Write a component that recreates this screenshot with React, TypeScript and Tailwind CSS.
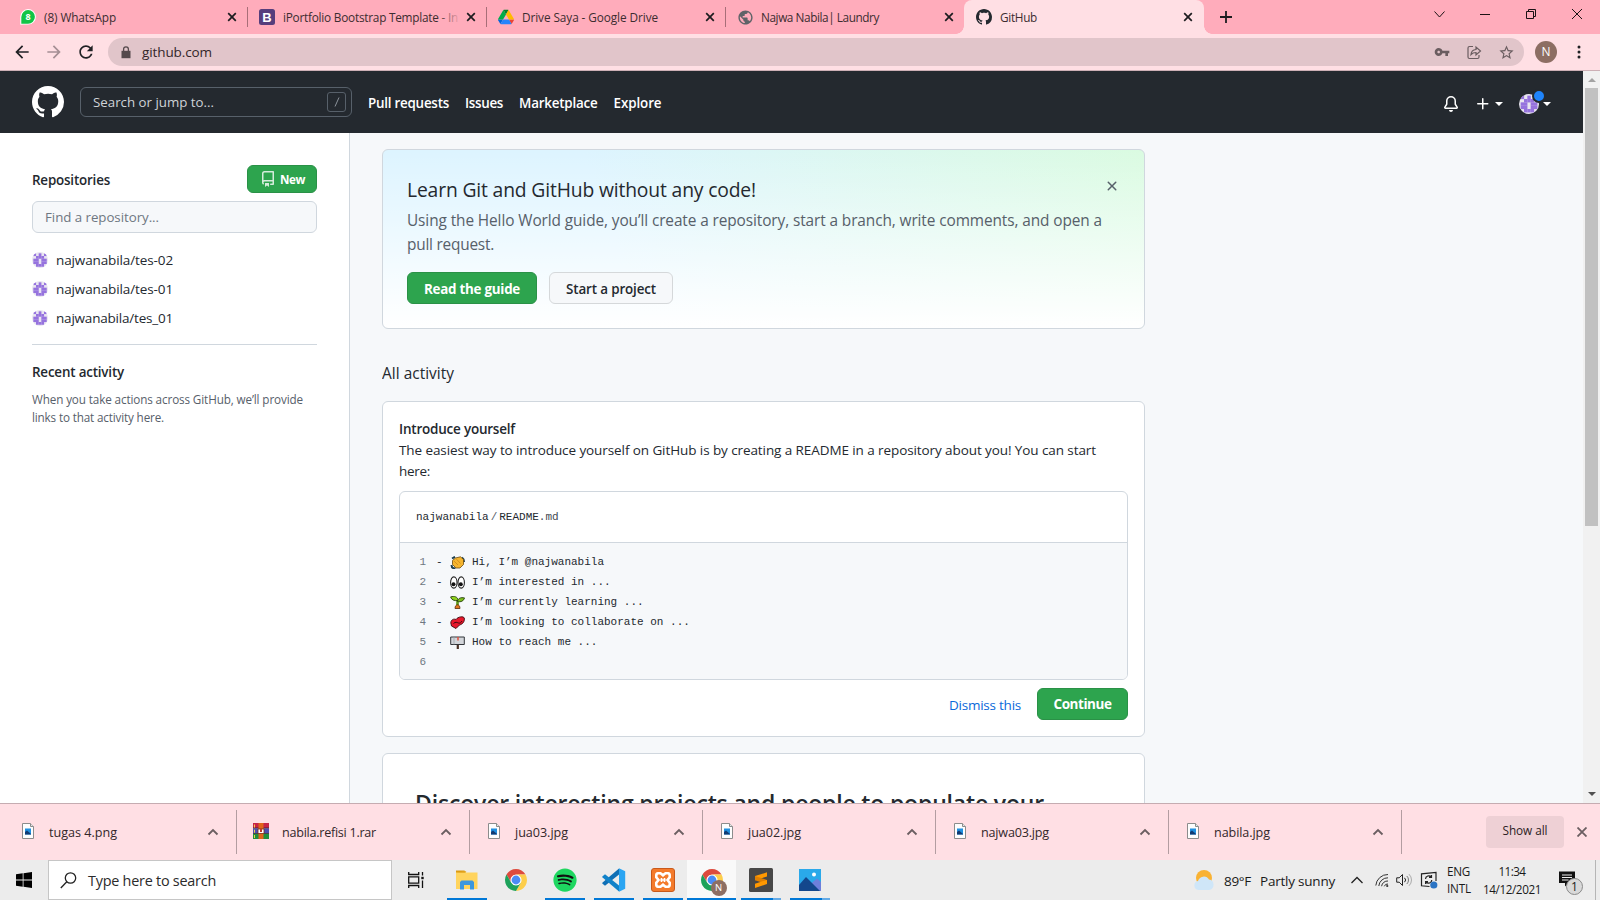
import { useLayoutEffect, useRef, useState, type ReactNode } from "react";
import { FaSpotify } from "react-icons/fa";

/* Single-line text that spreads its letters to fill a given advance width. */
function Fit({ w, className = "", flush, children }: { w: number; className?: string; flush?: boolean; children: string }) {
  const ref = useRef<HTMLSpanElement>(null);
  const [spacing, setSpacing] = useState(0);
  useLayoutEffect(() => {
    const el = ref.current;
    if (!el) return;
    el.style.letterSpacing = "0px";
    const gap = (w - el.getBoundingClientRect().width) / children.length;
    el.style.letterSpacing = `${gap}px`;
    setSpacing(gap);
  }, [w, children]);
  return (
    <span
      ref={ref}
      className={`inline-block shrink-0 whitespace-pre ${flush ? "" : "pt-0.5"} ${className}`}
      style={{ letterSpacing: spacing }}
    >
      {children}
    </span>
  );
}

function Octicon({ d, className = "" }: { d: string[]; className?: string }) {
  return (
    <svg viewBox="0 0 16 16" fill="currentColor" fillRule="evenodd" className={className}>
      {d.map((p) => (
        <path key={p} d={p} />
      ))}
    </svg>
  );
}

function Material({ d, className = "" }: { d: string; className?: string }) {
  return (
    <svg viewBox="0 0 24 24" fill="currentColor" className={`shrink-0 ${className}`}>
      <path d={d} />
    </svg>
  );
}

const MARK = [
  "M8 0C3.58 0 0 3.58 0 8c0 3.54 2.29 6.53 5.47 7.59.4.07.55-.17.55-.38 0-.19-.01-.82-.01-1.49-2.01.37-2.53-.49-2.69-.94-.09-.23-.48-.94-.82-1.13-.28-.15-.68-.52-.01-.53.63-.01 1.08.58 1.23.82.72 1.21 1.87.87 2.33.66.07-.52.28-.87.51-1.07-1.78-.2-3.64-.89-3.64-3.95 0-.87.31-1.59.82-2.15-.08-.2-.36-1.02.08-2.12 0 0 .67-.21 2.2.82.64-.18 1.32-.27 2-.27.68 0 1.36.09 2 .27 1.53-1.04 2.2-.82 2.2-.82.44 1.1.16 1.92.08 2.12.51.56.82 1.27.82 2.15 0 3.07-1.87 3.75-3.65 3.95.29.25.54.73.54 1.48 0 1.07-.01 1.93-.01 2.2 0 .21.15.46.55.38A8.013 8.013 0 0016 8c0-4.42-3.58-8-8-8z",
];
const BELL = [
  "M8 16a2 2 0 001.985-1.75c.017-.137-.097-.25-.235-.25h-3.5c-.138 0-.252.113-.235.25A2 2 0 008 16z",
  "M8 1.5A3.5 3.5 0 004.5 5v2.947c0 .346-.102.683-.294.97l-1.703 2.556a.018.018 0 00-.003.01l.001.006c0 .002.002.004.004.006a.017.017 0 00.006.004l.007.001h10.964l.007-.001a.016.016 0 00.006-.004.016.016 0 00.004-.006l.001-.007a.017.017 0 00-.003-.01l-1.703-2.554a1.75 1.75 0 01-.294-.97V5A3.5 3.5 0 008 1.5zM3 5a5 5 0 0110 0v2.947c0 .05.015.098.042.139l1.703 2.555A1.518 1.518 0 0113.482 13H2.518a1.518 1.518 0 01-1.263-2.36l1.703-2.554A.25.25 0 003 7.947V5z",
];
const PLUS = [
  "M7.75 2a.75.75 0 01.75.75V7h4.25a.75.75 0 110 1.5H8.5v4.25a.75.75 0 11-1.5 0V8.5H2.75a.75.75 0 010-1.5H7V2.75A.75.75 0 017.75 2z",
];
const REPO = [
  "M2 2.5A2.5 2.5 0 014.5 0h8.75a.75.75 0 01.75.75v12.5a.75.75 0 01-.75.75h-2.5a.75.75 0 110-1.5h1.75v-2h-8a1 1 0 00-.714 1.7.75.75 0 01-1.072 1.05A2.495 2.495 0 012 11.5v-9zm10.5-1V9h-8c-.356 0-.694.074-1 .208V2.5a1 1 0 011-1h8zM5 12.25v3.25a.25.25 0 00.4.2l1.45-1.087a.25.25 0 01.3 0L8.6 15.7a.25.25 0 00.4-.2v-3.25a.25.25 0 00-.25-.25h-3.5a.25.25 0 00-.25.25z",
];
const CROSS = [
  "M3.72 3.72a.75.75 0 011.06 0L8 6.94l3.22-3.22a.75.75 0 111.06 1.06L9.06 8l3.22 3.22a.75.75 0 11-1.06 1.06L8 9.06l-3.22 3.22a.75.75 0 01-1.06-1.06L6.94 8 3.72 4.78a.75.75 0 010-1.06z",
];
const M_BACK = "M20 11H7.83l5.59-5.59L12 4l-8 8 8 8 1.41-1.41L7.83 13H20v-2z";
const M_RELOAD =
  "M17.65 6.35C16.2 4.9 14.21 4 12 4c-4.42 0-7.99 3.58-7.99 8s3.57 8 7.99 8c3.73 0 6.84-2.55 7.73-6h-2.08c-.82 2.33-3.04 4-5.65 4-3.31 0-6-2.69-6-6s2.69-6 6-6c1.66 0 3.14.69 4.22 1.78L13 11h7V4l-2.35 2.35z";
const M_KEY =
  "M12.65 10C11.83 7.67 9.61 6 7 6c-3.31 0-6 2.69-6 6s2.69 6 6 6c2.61 0 4.83-1.67 5.65-4H17v4h4v-4h2v-4H12.65zM7 14c-1.1 0-2-.9-2-2s.9-2 2-2 2 .9 2 2-.9 2-2 2z";
const M_STAR =
  "M22 9.24l-7.19-.62L12 2 9.19 8.63 2 9.24l5.46 4.73L5.82 21 12 17.27 18.18 21l-1.63-7.03L22 9.24zM12 15.4l-3.76 2.27 1-4.28-3.32-2.88 4.38-.38L12 6.1l1.71 4.04 4.38.38-3.32 2.88 1 4.28L12 15.4z";
const M_GLOBE =
  "M12 2C6.48 2 2 6.48 2 12s4.48 10 10 10 10-4.48 10-10S17.52 2 12 2zm-1 17.93c-3.95-.49-7-3.85-7-7.93 0-.62.08-1.21.21-1.79L9 15v1c0 1.1.9 2 2 2v1.93zm6.9-2.54c-.26-.81-1-1.39-1.9-1.39h-1v-3c0-.55-.45-1-1-1H8v-2h2c.55 0 1-.45 1-1V7h2c1.1 0 2-.9 2-2v-.41c2.93 1.19 5 4.06 5 7.41 0 2.08-.8 3.97-2.1 5.39z";

/* ---------- Browser tabs ---------- */

function TabClose() {
  return (
    <svg viewBox="0 0 10 10" className="h-2.5 w-2.5 shrink-0" stroke="#1c1c1f" strokeWidth="1.7">
      <path d="M1.2 1.2l7.6 7.6M8.8 1.2l-7.6 7.6" />
    </svg>
  );
}

const whatsapp = (
  <svg viewBox="0 0 16 16" className="h-4 w-4">
    <path d="M0.3 15.8V8A7.8 7.8 0 1 1 8.2 15.6H4z" fill="#fff" />
    <path d="M1.3 14.8V8A6.8 6.8 0 1 1 8.1 14.7H4z" fill="#12c446" />
    <text x="8" y="11.3" textAnchor="middle" fontSize="9" fontWeight="700" fill="#fff" fontFamily="Open Sans, sans-serif">
      8
    </text>
  </svg>
);
const bootstrap = (
  <svg viewBox="0 0 16 16" className="h-4 w-4">
    <rect width="16" height="16" rx="2.5" fill="#563d7c" />
    <text x="8" y="12.6" textAnchor="middle" fontSize="13" fontWeight="700" fill="#fff" fontFamily="Liberation Sans, sans-serif">
      B
    </text>
  </svg>
);
const drive = (
  <svg viewBox="0 0 87.3 78" className="h-4 w-4">
    <path d="M6.6 66.85l3.85 6.65c.8 1.4 1.95 2.5 3.3 3.3L27.5 53H0c0 1.55.4 3.1 1.2 4.5z" fill="#0066da" />
    <path d="M43.65 25L29.9 1.2c-1.35.8-2.5 1.9-3.3 3.3l-25.4 44A9.06 9.06 0 0 0 0 53h27.5z" fill="#00ac47" />
    <path d="M73.55 76.8c1.35-.8 2.5-1.9 3.3-3.3l1.6-2.75L86.1 57.5c.8-1.4 1.2-2.95 1.2-4.5H59.8l5.85 11.5z" fill="#ea4335" />
    <path d="M43.65 25L57.4 1.2C56.05.4 54.5 0 52.9 0H34.4c-1.6 0-3.15.45-4.5 1.2z" fill="#00832d" />
    <path d="M59.8 53H27.5L13.75 76.8c1.35.8 2.9 1.2 4.5 1.2h50.8c1.6 0 3.15-.45 4.5-1.2z" fill="#2684fc" />
    <path d="M73.4 26.5l-12.7-22c-.8-1.4-1.95-2.5-3.3-3.3L43.65 25 59.8 53h27.45c0-1.55-.4-3.1-1.2-4.5z" fill="#ffba00" />
  </svg>
);

function Tab({ icon, title, w, divider, fade }: { icon: ReactNode; title: string; w: number; divider?: boolean; fade?: boolean }) {
  return (
    <div className="relative flex h-[34px] w-[239px] shrink-0 items-center pl-3">
      <div className="flex h-4 w-4 items-center justify-center">{icon}</div>
      <div className="relative ml-2 w-[178px] overflow-hidden text-[11.8px] leading-[18px] text-[#3c2c30]">
        <Fit flush w={w}>
          {title}
        </Fit>
        {fade && <div className="absolute inset-y-0 right-0 w-6 bg-gradient-to-r from-[#ffacbb]/0 to-[#ffacbb]" />}
      </div>
      <div className="ml-[5px]">
        <TabClose />
      </div>
      {divider && <div className="absolute -right-px top-[7px] h-5 w-px bg-[#a86e78]" />}
    </div>
  );
}

function TabStrip() {
  return (
    <div className="flex h-[34px] bg-[#ffacbb] pl-2">
      <Tab icon={whatsapp} title="(8) WhatsApp" w={72} divider />
      <Tab icon={bootstrap} title="iPortfolio Bootstrap Template - In" w={175} divider fade />
      <Tab icon={drive} title="Drive Saya - Google Drive" w={136} divider />
      <Tab icon={<Material d={M_GLOBE} className="h-[17px] w-[17px] text-[#5f6368]" />} title="Najwa Nabila| Laundry" w={118} />
      <div className="relative h-[34px] w-[240px] shrink-0 rounded-t-lg bg-[#ffdfe4]">
        <div className="absolute -left-2 bottom-0 h-2 w-2 bg-[radial-gradient(circle_at_0_0,#ffacbb_7.5px,#ffdfe4_8px)]" />
        <div className="absolute -right-2 bottom-0 h-2 w-2 bg-[radial-gradient(circle_at_100%_0,#ffacbb_7.5px,#ffdfe4_8px)]" />
        <Tab icon={<Octicon d={MARK} className="h-4 w-4 text-[#24292f]" />} title="GitHub" w={37} />
      </div>
      <div className="flex h-[34px] items-center pl-4">
        <svg viewBox="0 0 12 12" className="h-3 w-3" stroke="#1c1c1f" strokeWidth="1.8">
          <path d="M6 0v12M0 6h12" />
        </svg>
      </div>
      <div className="ml-auto flex h-7 items-center text-[#1b1214]">
        <svg viewBox="0 0 46 28" className="h-7 w-[46px]" fill="none" stroke="currentColor">
          <path d="M18.5 11.5l5 5.5 5-5.5" />
        </svg>
        <svg viewBox="0 0 46 28" className="h-7 w-[46px]" stroke="currentColor">
          <path d="M18 14.5h10" />
        </svg>
        <svg viewBox="0 0 46 28" className="h-7 w-[46px]" fill="none" stroke="currentColor">
          <path d="M18.5 11.5h7v7h-7zM20.5 11.5v-2h7v7h-2" />
        </svg>
        <svg viewBox="0 0 46 28" className="h-7 w-[46px]" stroke="currentColor">
          <path d="M18 9l10 10M28 9l-10 10" />
        </svg>
      </div>
    </div>
  );
}

function Toolbar() {
  return (
    <div className="flex h-[37px] items-center border-b border-[#cdb0b6] bg-[#ffdfe4] pl-3">
      <Material d={M_BACK} className="h-5 w-5 text-[#202124]" />
      <Material d={M_BACK} className="ml-3 h-5 w-5 rotate-180 text-[#a58f94]" />
      <Material d={M_RELOAD} className="ml-3 h-5 w-5 text-[#202124]" />
      <div className="ml-3 flex h-7 w-[1416px] items-center rounded-full bg-[#e1c5ca] pl-[13px] pr-[9px]">
        <svg viewBox="0 0 10 13" className="h-[13px] w-2.5">
          <path d="M0.5 4.8h9v7.4h-9z" fill="#55494c" />
          <path d="M2.6 5V3.2a2.4 2.4 0 0 1 4.8 0V5" fill="none" stroke="#55494c" strokeWidth="1.3" />
        </svg>
        <Fit flush w={70} className="ml-[11px] text-[13.5px] leading-5 text-[#332629]">
          github.com
        </Fit>
        <div className="ml-auto flex items-center gap-4 text-[#6a5d60]">
          <Material d={M_KEY} className="h-4 w-4" />
          <svg viewBox="0 0 16 16" className="h-4 w-4" fill="none" stroke="currentColor" strokeWidth="1.2">
            <path d="M7 2.5H3.5a1.5 1.5 0 0 0-1.5 1.5v9a1.5 1.5 0 0 0 1.5 1.5h8A1.5 1.5 0 0 0 13 13v-2" />
            <path d="M5 10.5c.3-3.2 2-4.8 5-5V3l4.5 4L10 11V8.5c-2.2 0-3.7.5-5 2z" />
          </svg>
          <Material d={M_STAR} className="h-[17px] w-[17px]" />
        </div>
      </div>
      <div className="ml-[11px] flex h-[22px] w-[22px] items-center justify-center rounded-full bg-[#8d6e63] text-xs text-white">N</div>
      <svg viewBox="0 0 4 14" className="ml-5 h-3.5 w-1" fill="#202124">
        <circle cx="2" cy="2" r="1.5" />
        <circle cx="2" cy="7" r="1.5" />
        <circle cx="2" cy="12" r="1.5" />
      </svg>
    </div>
  );
}

/* ---------- GitHub page ---------- */

const IDENTICON = ["X.X.X", ".XXX.", "XX.XX", "XX.XX", ".XXX."];

function Avatar({ className = "" }: { className?: string }) {
  return (
    <svg viewBox="0 0 6 6" className={`shrink-0 rounded-full bg-[#e9e6f0] ${className}`}>
      {IDENTICON.flatMap((row, y) =>
        row
          .split("")
          .map((c, x) => (c === "X" ? <rect key={`${x}-${y}`} x={x + 0.5} y={y + 0.5} width="1.03" height="1.03" fill="#9673de" /> : null)),
      )}
    </svg>
  );
}

function Caret() {
  return <div className="h-0 w-0 border-x-4 border-t-4 border-x-transparent border-t-white" />;
}

function Header() {
  return (
    <header className="flex h-[62px] items-center bg-[#24292f] pl-8 pr-8 text-white">
      <Octicon d={MARK} className="h-8 w-8" />
      <div className="ml-4 flex h-[30px] w-[272px] items-center rounded-md border border-[#57606a] pl-3 pr-[5px] text-[13.3px] text-[#cfd3d7]">
        <Fit w={121}>Search or jump to...</Fit>
        <div className="ml-auto flex h-5 w-[19px] items-center justify-center rounded-[3px] border border-[#57606a]">
          <svg viewBox="0 0 6 10" className="h-2.5 w-1.5" stroke="#8b939b">
            <path d="M5 .5L1 9.5" />
          </svg>
        </div>
      </div>
      <nav className="ml-4 flex gap-4 pt-px text-[13.4px] font-semibold">
        <Fit w={81}>Pull requests</Fit>
        <Fit w={38}>Issues</Fit>
        <Fit w={78.5}>Marketplace</Fit>
        <Fit w={48}>Explore</Fit>
      </nav>
      <div className="ml-auto flex items-center pt-[3px]">
        <Octicon d={BELL} className="h-4 w-4" />
        <Octicon d={PLUS} className="ml-4 h-4 w-4" />
        <div className="ml-1">
          <Caret />
        </div>
        <div className="relative ml-4">
          <Avatar className="h-5 w-5" />
          <div className="absolute -right-[7px] -top-[5px] h-3.5 w-3.5 rounded-full border-2 border-[#24292f] bg-[#1f84fb]" />
        </div>
        <div className="ml-1">
          <Caret />
        </div>
      </div>
    </header>
  );
}

function Sidebar() {
  return (
    <aside className="h-[670px] w-[350px] shrink-0 border-r border-[#d0d7de] bg-white pl-8 pr-8 pt-8">
      <div className="flex h-7 items-center justify-between">
        <Fit w={78} className="text-[13.4px] font-semibold leading-5">
          Repositories
        </Fit>
        <div className="flex h-7 w-[70px] items-center rounded-md border border-[#2a9147] bg-[#2da44e] pl-3 text-white">
          <Octicon d={REPO} className="h-4 w-4 opacity-80" />
          <Fit w={25} className="ml-1 text-[11.6px] font-bold leading-[18px]">
            New
          </Fit>
        </div>
      </div>
      <div className="mt-2 flex h-8 items-center rounded-md border border-[#d0d7de] bg-[#f6f8fa] pl-3 text-[13.3px] text-[#6e7781]">
        <Fit w={114}>Find a repository...</Fit>
      </div>
      <ul className="mt-3 text-[13.5px]">
        {["tes-02", "tes-01", "tes_01"].map((name) => (
          <li key={name} className="flex h-[29px] items-center">
            <Avatar className="h-4 w-4" />
            <Fit flush w={117} className="ml-2 leading-5">{`najwanabila/${name}`}</Fit>
          </li>
        ))}
      </ul>
      <div className="mt-3 border-t border-[#d0d7de] pt-3.5">
        <Fit w={92} className="text-[13.4px] font-semibold leading-5">
          Recent activity
        </Fit>
        <div className="mt-1.5 flex flex-col items-start text-[11.7px] leading-4 text-[#57606a]">
          <Fit w={271}>When you take actions across GitHub, we’ll provide</Fit>
          <Fit w={132}>links to that activity here.</Fit>
        </div>
      </div>
    </aside>
  );
}

function Hero() {
  return (
    <section className="flex h-[180px] flex-col items-start rounded-md border border-[#d0d7de] bg-[linear-gradient(to_bottom,rgba(255,255,255,0),#fff),linear-gradient(70deg,#ddf4ff_32%,#dafbe1_100%)] px-6 pt-6">
      <div className="flex w-full items-start justify-between">
        <Fit w={349} className="text-[19.3px] leading-7">
          Learn Git and GitHub without any code!
        </Fit>
        <Octicon d={CROSS} className="mt-1 h-4 w-4 text-[#57606a]" />
      </div>
      <div className="mt-1 flex flex-col items-start text-[15.4px] leading-[22px] text-[#57606a]">
        <Fit w={695}>Using the Hello World guide, you’ll create a repository, start a branch, write comments, and open a</Fit>
        <Fit w={87}>pull request.</Fit>
      </div>
      <div className="mt-4 flex gap-3 text-[13.4px]">
        <div className="flex h-8 w-[130px] items-center justify-center rounded-md border border-[#2a9147] bg-[#2da44e] font-bold text-white">
          <Fit w={96}>Read the guide</Fit>
        </div>
        <div className="flex h-8 w-[124px] items-center justify-center rounded-md border border-[#d5d8da] bg-[#f6f8fa] font-semibold">
          <Fit w={90}>Start a project</Fit>
        </div>
      </div>
    </section>
  );
}

const wave = (
  <svg viewBox="0 0 15 13" className="h-[13px] w-[15px]">
    <path d="M2 2.5L5 .8M1.5 9c0 2 1.5 3.500 4 3.500M12 1.500c1.500 1 2 2.500 2 4.500" stroke="#1d3f4d" strokeWidth="2" fill="none" />
    <path d="M2.500 4.500L5.500 2l5-1.200 3 2.700v5L10 12H6L2.500 8.500z" fill="#f5b52e" stroke="#6b4a10" strokeWidth=".8" />
    <path d="M4 5l4 4M6.500 3.200l4 4.300" stroke="#c9871a" strokeWidth=".8" />
  </svg>
);
const eyes = (
  <svg viewBox="0 0 15 13" className="h-[13px] w-[15px]">
    <ellipse cx="3.8" cy="6.5" rx="3.2" ry="5.6" fill="#fff" stroke="#222" strokeWidth="1.1" />
    <ellipse cx="11.2" cy="6.5" rx="3.2" ry="5.6" fill="#fff" stroke="#222" strokeWidth="1.1" />
    <circle cx="3.5" cy="8.3" r="2" fill="#111" />
    <circle cx="10.8" cy="8.3" r="2" fill="#111" />
  </svg>
);
const seedling = (
  <svg viewBox="0 0 15 13" className="h-[13px] w-[15px]">
    <path d="M7.5 4.5v5" stroke="#5d9a18" strokeWidth="2.6" />
    <path d="M.6.9C4-.4 8 .8 8.300 4.500 4 5 1.500 4 .6.9z" fill="#8fd11f" stroke="#26400b" strokeWidth=".9" />
    <path d="M14.500 1.900C11 1.100 8 2.100 7.500 5.500c3.500.8 6-.4 7-3.600z" fill="#7cc01c" stroke="#26400b" strokeWidth=".9" />
    <path d="M5 12.500c0-5 5-5 5 0z" fill="#e0761f" stroke="#5a2c08" strokeWidth=".8" />
  </svg>
);
const hearts = (
  <svg viewBox="0 0 15 13" className="h-[13px] w-[15px]">
    <path d="M.8 7C.8 3.500 4 2.500 6 3.500 8 .5 13.500 0 14.300 2c.5 3-1 6-4.800 7L6 12.500 1.500 10z" fill="#e8182b" stroke="#3a0a10" strokeWidth=".9" />
    <path d="M3.500 7.500c2-2 3.500-1 5-.5s2.500-.5 3.500-2" fill="none" stroke="#3a0a10" />
  </svg>
);
const mailbox = (
  <svg viewBox="0 0 15 13" className="h-[13px] w-[15px]">
    <path d="M7.800 8v5" stroke="#4a3226" strokeWidth="2.2" />
    <path d="M.7 1h13.600v7.500H.7z" fill="#d3d6da" stroke="#33363a" strokeWidth="1" />
    <path d="M4 1v7.500" stroke="#a0a4a9" strokeWidth=".8" />
    <path d="M8 1v3.500" stroke="#e0503e" strokeWidth="1.5" />
  </svg>
);

const README_LINES: { icon: ReactNode; text: string }[] = [
  { icon: wave, text: "Hi, I’m @najwanabila" },
  { icon: eyes, text: "I’m interested in ..." },
  { icon: seedling, text: "I’m currently learning ..." },
  { icon: hearts, text: "I’m looking to collaborate on ..." },
  { icon: mailbox, text: "How to reach me ..." },
];

function IntroCard() {
  return (
    <section className="h-[336px] rounded-md border border-[#d0d7de] bg-white px-4 pt-4">
      <div className="flex flex-col items-start text-[13.5px] leading-[19px]">
        <Fit w={116} className="font-semibold">
          Introduce yourself
        </Fit>
        <Fit w={697}>The easiest way to introduce yourself on GitHub is by creating a README in a repository about you! You can start</Fit>
        <Fit w={31}>here:</Fit>
      </div>
      <div className="mt-[10px] overflow-hidden rounded-md border border-[#d0d7de] font-['Liberation_Mono',monospace] text-[11px]">
        <div className="flex h-[51px] items-center border-b border-[#d0d7de] pl-4">
          <span>najwanabila</span>
          <span className="mx-0.5 text-[#57606a]">/</span>
          <span>
            README<span className="text-[#424a53]">.md</span>
          </span>
        </div>
        <div className="h-[136px] bg-[#f6f8fa] pt-[9px] leading-5">
          {README_LINES.map((line, i) => (
            <div key={line.text} className="flex h-5 items-center">
              <span className="w-[26px] text-right text-[#6e7781]">{i + 1}</span>
              <span className="ml-[10px] w-[14px]">-</span>
              {line.icon}
              <span className="ml-[7px] whitespace-pre">{line.text}</span>
            </div>
          ))}
          <div className="flex h-5 items-center">
            <span className="w-[26px] text-right text-[#6e7781]">6</span>
          </div>
        </div>
      </div>
      <div className="mt-2 flex items-center justify-end gap-4 text-[13.5px]">
        <Fit w={72} className="text-[#0969da]">
          Dismiss this
        </Fit>
        <div className="flex h-8 w-[91px] items-center justify-center rounded-md border border-[#2a9147] bg-[#2da44e] font-bold text-white">
          <Fit flush w={58}>
            Continue
          </Fit>
        </div>
      </div>
    </section>
  );
}

function Scrollbar() {
  return (
    <div className="flex h-[732px] w-[17px] shrink-0 flex-col items-center bg-[#f1f1f1]">
      <div className="mt-[7px] h-0 w-0 border-x-4 border-b-4 border-x-transparent border-b-[#a3a3a3]" />
      <div className="mt-1.5 h-[438px] w-[13px] bg-[#c1c1c1]" />
      <div className="mb-[7px] mt-auto h-0 w-0 border-x-4 border-t-4 border-x-transparent border-t-[#505050]" />
    </div>
  );
}

function GitHubPage() {
  return (
    <div className="flex h-[732px] overflow-hidden">
      <div className="w-[1583px] bg-[#f6f8fa] text-[#24292f]">
        <Header />
        <div className="flex">
          <Sidebar />
          <main className="ml-8 flex h-[670px] w-[763px] flex-col gap-4 overflow-hidden pt-4">
            <div className="flex shrink-0 flex-col items-stretch">
              <Hero />
              <Fit w={72} className="mt-[31px] self-start text-[15.4px] leading-6">
                All activity
              </Fit>
            </div>
            <div className="-mt-px shrink-0">
              <IntroCard />
            </div>
            <section className="h-40 shrink-0 rounded-md border border-[#d0d7de] bg-white px-8 pt-[29px]">
              <Fit w={629} className="text-[23px] font-semibold leading-9">
                Discover interesting projects and people to populate your
              </Fit>
            </section>
          </main>
        </div>
      </div>
      <Scrollbar />
    </div>
  );
}

/* ---------- Download shelf ---------- */

const imageFile = (
  <svg viewBox="0 0 16 16" className="h-4 w-4">
    <path d="M2.5.5h8l3 3v12h-11z" fill="#fdfdfd" stroke="#8c8c8c" />
    <path d="M10.5.5v3h3" fill="#e6e6e6" stroke="#8c8c8c" />
    <rect x="5" y="5.5" width="6" height="6" fill="#1f8fe0" />
    <path d="M5 11.5V9l2-1.5L11 11v.5z" fill="#123a72" />
  </svg>
);
const rarFile = (
  <svg viewBox="0 0 16 16" className="h-4 w-4">
    <path d="M0 0h16v5H0z" fill="#c72547" />
    <path d="M0 5.300h16v5H0z" fill="#4b4fb0" />
    <path d="M0 10.600h16V16H0z" fill="#1f8f3c" />
    <path d="M0 5h16M0 10.500h16" stroke="#2b1b2b" strokeWidth=".7" />
    <path d="M1.500 1.500v3M1.500 6.700v3M1.500 12v3" stroke="#f2d24a" />
    <path d="M5.500 0h5v16h-5z" fill="#e0641b" />
    <path d="M5 6h6v4.500H5z" fill="#fff" stroke="#7a2f12" strokeWidth=".8" />
    <path d="M7 6v3h2V6" fill="#c0392b" />
  </svg>
);

const DOWNLOADS = [
  { name: "tugas 4.png", w: 68, icon: imageFile },
  { name: "nabila.refisi 1.rar", w: 94, icon: rarFile },
  { name: "jua03.jpg", w: 53, icon: imageFile },
  { name: "jua02.jpg", w: 53, icon: imageFile },
  { name: "najwa03.jpg", w: 68, icon: imageFile },
  { name: "nabila.jpg", w: 56, icon: imageFile },
];

function DownloadShelf() {
  return (
    <div className="flex h-[57px] items-center border-t border-[#c5acb1] bg-[#ffdfe4] pl-1">
      {DOWNLOADS.map((d) => (
        <div key={d.name} className="flex h-11 w-[233px] shrink-0 items-center border-r border-[#b39da1] pl-4">
          <span className="-mt-0.5">{d.icon}</span>
          <Fit w={d.w} className="ml-[13px] text-[12.6px] leading-5 text-[#33272a]">
            {d.name}
          </Fit>
          <svg viewBox="0 0 12 8" className="ml-auto mr-[17px] h-2 w-3" fill="none" stroke="#6b5e61" strokeWidth="1.8">
            <path d="M1.5 6.5L6 2l4.5 4.5" />
          </svg>
        </div>
      ))}
      <div className="ml-auto flex h-8 w-[78px] items-center justify-center rounded bg-[#eed0d5] text-[11.8px] text-[#2c2123]">
        <Fit flush w={45} className="pb-0.5">
          Show all
        </Fit>
      </div>
      <svg viewBox="0 0 10 10" className="ml-[13px] mr-[13px] h-2.5 w-2.5" stroke="#6b5e61" strokeWidth="1.8">
        <path d="M.5.5l9 9M9.5.5l-9 9" />
      </svg>
    </div>
  );
}

/* ---------- Taskbar ---------- */

const chrome = (
  <svg viewBox="0 0 48 48" className="h-6 w-6">
    <circle cx="24" cy="24" r="12" fill="#fff" />
    <path d="M24 13H43.05A22 22 0 0 0 4.95 13L14.47 29.5A11 11 0 0 1 24 13z" fill="#dd4b3e" />
    <path d="M43.05 13A22 22 0 0 1 24 46L33.53 29.5A11 11 0 0 0 24 13z" fill="#fdce4b" />
    <path d="M24 46A22 22 0 0 1 4.95 13L14.47 29.5A11 11 0 0 0 33.53 29.5z" fill="#1da25b" />
    <circle cx="24" cy="24" r="8.8" fill="#4a8bf5" />
  </svg>
);
const explorer = (
  <svg viewBox="0 0 24 22" className="h-[22px] w-6">
    <path d="M1 1.500h8.500l1.500 2.500H1z" fill="#dc9b12" />
    <path d="M1 3.500h21.500V20H1z" fill="#ffd45e" />
    <path d="M1 3.500h9l1.500-1.500" fill="#e5a823" />
    <path d="M5 20.500v-7.500l1.500-1.500h11l1.500 1.500v7.500h-4V16H9v4.500z" fill="#3c97de" />
  </svg>
);
const spotify = (
  <div className="flex h-6 w-6 items-center justify-center rounded-full bg-[radial-gradient(circle,#111_60%,transparent_62%)]">
    <FaSpotify className="h-6 w-6 text-[#1ed760]" />
  </div>
);
const vscode = (
  <svg viewBox="0 0 24 24" className="h-6 w-6">
    <path d="M17 .5v6L3 17.800.6 15.800a.8.8 0 0 1 0-1.200z" fill="#0f6fb5" />
    <path d="M17 23.500v-6L3 6.200.6 8.200a.8.8 0 0 0 0 1.200z" fill="#1182c9" />
    <path d="M17 .3l6.200 2.900v17.600L17 23.700z" fill="#2aa5f2" />
  </svg>
);
const xampp = (
  <div className="flex h-6 w-6 items-center justify-center rounded-[3px] border border-[#c9591a] bg-[#f47b2b]">
    <svg viewBox="0 0 18 18" className="h-[18px] w-[18px]" fill="none" stroke="#fff" strokeWidth="2.6">
      <path d="M4 2.300h2.500l2.500 2 2.500-2H14a2 2 0 0 1 1.700 2v1.900L13.500 9l2.200 2.800v1.900a2 2 0 0 1-1.700 2h-2.500l-2.500-2-2.500 2H4a2 2 0 0 1-1.700-2v-1.900L4.500 9 2.300 6.200V4.300a2 2 0 0 1 1.700-2z" />
      <path d="M6.300 9h5.400M7.500 7v4M10.500 7v4" strokeWidth="1.6" />
    </svg>
  </div>
);
const chromeProfile = (
  <div className="relative">
    {chrome}
    <div className="absolute -bottom-1 -right-[3px] flex h-4 w-4 items-center justify-center rounded-full bg-[#8d6e63] text-[9.5px] text-white">N</div>
  </div>
);
const sublime = (
  <svg viewBox="0 0 24 24" className="h-6 w-6">
    <rect width="24" height="24" rx="1.5" fill="#474747" />
    <path d="M18 4.300v4.200L6 12.300V8.100z" fill="#ff9800" />
    <path d="M6 8.100l12 3.800v4.200L6 12.300z" fill="#e07f00" />
    <path d="M18 11.900v4.200L6 19.900v-4.200z" fill="#ff9800" />
  </svg>
);
const photos = (
  <svg viewBox="0 0 22 22" className="h-[22px] w-[22px]">
    <rect width="22" height="22" fill="#2aa9ea" />
    <path d="M22 22V13l-4-3.500-7 6V22z" fill="#6d7fdb" />
    <path d="M0 16L7 8l14 14H0z" fill="#13478c" />
    <circle cx="15" cy="5.5" r="2" fill="#fff" />
  </svg>
);

const APPS: { id: string; icon: ReactNode; bar: "none" | "single" | "stack" | "active" }[] = [
  { id: "explorer", icon: explorer, bar: "single" },
  { id: "chrome", icon: chrome, bar: "none" },
  { id: "spotify", icon: spotify, bar: "single" },
  { id: "vscode", icon: vscode, bar: "single" },
  { id: "xampp", icon: xampp, bar: "single" },
  { id: "chrome-profile", icon: chromeProfile, bar: "active" },
  { id: "sublime", icon: sublime, bar: "stack" },
  { id: "photos", icon: photos, bar: "stack" },
];

function AppButton({ icon, bar }: { icon: ReactNode; bar: string }) {
  return (
    <div className={`flex h-10 w-[49px] flex-col items-center ${bar === "active" ? "bg-[#f9f9f9]" : ""}`}>
      <div className="flex h-[38px] items-center pt-0.5">{icon}</div>
      {bar === "single" && <div className="h-0.5 w-10 bg-[#0078d7]" />}
      {bar === "active" && <div className="h-0.5 w-full bg-[#0078d7]" />}
      {bar === "stack" && (
        <div className="flex h-0.5 w-10">
          <div className="w-8 bg-[#0078d7]" />
          <div className="w-2 bg-[#64aae6]" />
        </div>
      )}
    </div>
  );
}

function Tray() {
  return (
    <div className="ml-auto flex h-10 items-center text-[13.5px] text-[#1a1a1a]">
      <svg viewBox="0 0 22 22" className="h-[22px] w-[22px]">
        <circle cx="11" cy="9" r="8" fill="#f9b233" />
        <path d="M5.500 21a4.500 4.500 0 0 1-.5-8.900 6 6 0 0 1 11-1.500A5.300 5.300 0 0 1 16.500 21z" fill="#cfe6f8" />
      </svg>
      <Fit w={27} className="ml-[9px]">
        89°F
      </Fit>
      <Fit w={75} className="ml-[9px]">
        Partly sunny
      </Fit>
      <svg viewBox="0 0 12 8" className="ml-4 h-2 w-3" fill="none" stroke="#222" strokeWidth="1.3">
        <path d="M.5 7L6 1.500 11.500 7" />
      </svg>
      <svg viewBox="0 0 14 14" className="ml-3 h-3.5 w-3.5" fill="none" stroke="#333" strokeWidth="1">
        <path d="M.8 12.500A12 12 0 0 1 13 1.500M3.800 13A9 9 0 0 1 13 4.800M6.600 13.200A6 6 0 0 1 13 8M9.300 13.300A3.500 3.500 0 0 1 13 11" />
        <circle cx="12.3" cy="13" r=".7" fill="#333" />
      </svg>
      <svg viewBox="0 0 17 14" className="ml-[7px] h-3.5 w-[17px]" fill="none" stroke="#222">
        <path d="M.7 4.800h2.500L6.500 1.500v11L3.200 9.200H.7z" />
        <path d="M8.500 4.800a3 3 0 0 1 0 4.400" />
        <path d="M10.800 3a5.500 5.500 0 0 1 0 8" stroke="#777" />
        <path d="M13 1.200a8 8 0 0 1 0 11.600" stroke="#aaa" />
      </svg>
      <svg viewBox="0 0 18 18" className="ml-[7px] h-[18px] w-[18px]" fill="none" stroke="#222" strokeWidth="1.2">
        <path d="M9.500 15.500L1.500 14.800V2.800L16 1.500v8.500" />
        <path d="M5.500 8A3.300 3.300 0 0 1 11.300 6M11.500 4v2.400H9M11.800 9a3.300 3.300 0 0 1-5.800 2M5.600 13v-2.400H8" />
        <circle cx="13.8" cy="14" r="3.6" fill="#2b74c4" stroke="none" />
      </svg>
      <div className="ml-[9px] flex w-6 flex-col items-start text-[11.7px] leading-[17px]">
        <Fit flush w={23}>
          ENG
        </Fit>
        <Fit flush w={24}>
          INTL
        </Fit>
      </div>
      <div className="ml-3 flex w-[58px] flex-col items-center text-[11.7px] leading-[18px]">
        <Fit flush w={27}>
          11:34
        </Fit>
        <Fit flush w={58}>
          14/12/2021
        </Fit>
      </div>
      <div className="relative ml-[18px] h-[18px] w-6">
        <svg viewBox="0 0 16 16" className="h-4 w-4">
          <path d="M0 .5h16v11.500H9.500L6 15.500V12H0z" fill="#111" />
          <path d="M3 4h10M3 6.500h10M3 9h6.500" stroke="#eee" />
        </svg>
        <div className="absolute left-[7px] top-[7px] flex h-[17px] w-[17px] items-center justify-center rounded-full border border-[#8a8a8a] bg-[#d9d9d9] text-[12px] leading-none">
          1
        </div>
      </div>
      <div className="ml-3 mr-1 h-10 w-px bg-[#b5b5b5]" />
    </div>
  );
}

function Taskbar() {
  return (
    <div className="flex h-10 items-center bg-[#ececec]">
      <div className="flex w-12 items-center justify-center">
        <svg viewBox="0 0 16 16" className="h-4 w-4" fill="#000">
          <path d="M0 2.300L6.700 1.300v6.300H0zM7.500 1.200L16 0v7.600H7.500zM0 8.400h6.700v6.300L0 13.700zM7.500 8.400H16V16l-8.500-1.200z" />
        </svg>
      </div>
      <div className="flex h-10 w-[344px] items-center border border-[#c6c6c6] bg-white pl-[11px]">
        <svg viewBox="0 0 17 17" className="h-[17px] w-[17px]" fill="none" stroke="#222" strokeWidth="1.3">
          <circle cx="10.5" cy="6" r="5.2" />
          <path d="M6.800 9.700L.8 16" />
        </svg>
        <Fit w={128} className="ml-[11px] text-[14.4px] text-[#2b2b2b]">
          Type here to search
        </Fit>
      </div>
      <div className="flex w-[50px] justify-center pr-0.5">
        <svg viewBox="0 0 16 16" className="h-4 w-4" fill="none" stroke="#111" strokeWidth="1.3">
          <path d="M.7 0v2.500h10V0M.7 16v-2.500h10V16M.7 4.800h10v6.400H.7zM14.500 0v3.500M14.500 8.500V16" />
          <path d="M13.300 4.800h2.400v2.400h-2.400z" fill="#111" stroke="none" />
        </svg>
      </div>
      {APPS.map((a) => (
        <AppButton key={a.id} icon={a.icon} bar={a.bar} />
      ))}
      <Tray />
    </div>
  );
}

export default function App() {
  return (
    <div className="h-[900px] w-[1600px] overflow-hidden font-['Open_Sans','Noto_Sans',sans-serif]">
      <TabStrip />
      <Toolbar />
      <GitHubPage />
      <DownloadShelf />
      <Taskbar />
    </div>
  );
}
